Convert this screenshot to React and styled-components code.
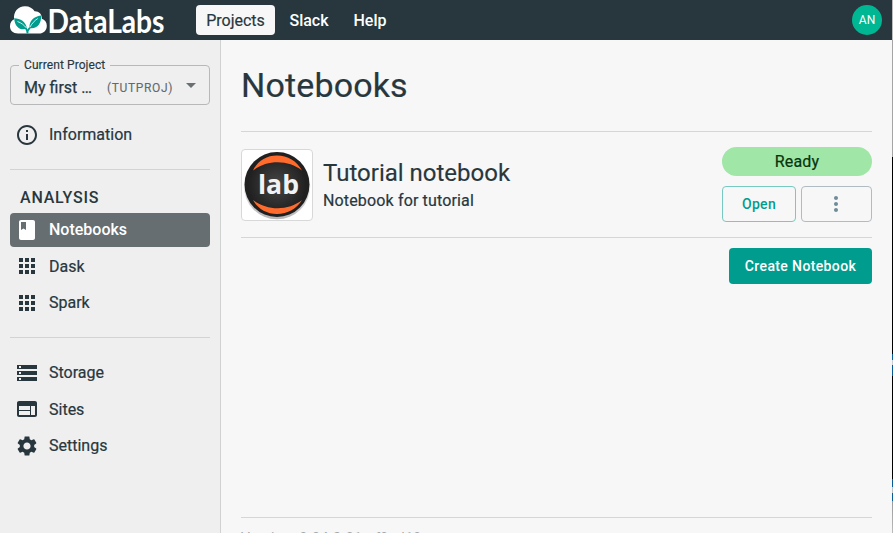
import React from "react";
import styled, { createGlobalStyle } from "styled-components";

const ink = "#28373e";
const teal = "#009d8f";

const GlobalStyle = createGlobalStyle`
  * { box-sizing: border-box; }
  body {
    margin: 0;
    font-family: Roboto, "Liberation Sans", sans-serif;
    color: ${ink};
    overflow: hidden;
    -webkit-font-smoothing: antialiased;
  }
  h1, h2, h3, p { margin: 0; font-weight: 400; }
  button { font-family: inherit; margin: 0; padding: 0; }
`;

const Page = styled.div`
  display: grid;
  grid-template-columns: minmax(0, 1fr) 1px;
  height: 533px;
`;
const Shell = styled.div`
  display: flex;
  flex-direction: column;
  height: 533px;
  overflow: hidden;
`;
const WindowEdge = styled.div`
  background: linear-gradient(#bcbcbc 0 40px, #a5a5a5 40px 157px, #000 157px 354px,
    #075b96 354px 360px, #c8d0d5 360px 365px, #075b96 365px 376px, #000 376px 479px,
    #075b96 479px 487px, #b7c2c8 487px 493px, #075b96 493px 501px, #999 501px, #bbb 533px);
`;
const Header = styled.header`
  display: flex;
  align-items: center;
  flex: 0 0 40px;
  padding: 0 10px;
  background: ${ink};
`;
const Logo = styled.svg`
  display: block;
  width: 156px;
  height: 40px;
  margin-right: 30px;
  overflow: visible;
`;
const Nav = styled.nav`
  display: flex;
  gap: 4px;
  flex: 1;
`;
const NavItem = styled.a`
  height: 30px;
  width: ${(p) => p.$width}px;
  line-height: 31px;
  text-align: center;
  border-radius: 4px;
  font-size: 16px;
  font-weight: ${(p) => (p.$active ? 400 : 500)};
  color: ${(p) => (p.$active ? ink : "#fff")};
  -webkit-text-stroke: ${(p) => (p.$active ? "0.2px" : "0")};
  background: ${(p) => (p.$active ? "#f7f7f7" : "transparent")};
`;
const Avatar = styled.div`
  width: 30px;
  height: 30px;
  border-radius: 50%;
  background: #00b793;
  color: #fff;
  font-size: 12px;
  line-height: 30px;
  text-align: center;
`;
const Body = styled.div`
  display: flex;
  flex: 1;
  min-height: 0;
`;
const Sidebar = styled.aside`
  flex: 0 0 221px;
  padding: 25px 10px 0;
  background: #efefef;
  border-right: 1px solid #d0d1d1;
`;
const ProjectSelect = styled.div`
  position: relative;
  display: flex;
  align-items: center;
  height: 40px;
  padding: 5px 10px 0 13px;
  border: 1px solid #b6b8b9;
  border-radius: 4px;
`;
const SelectLabel = styled.span`
  position: absolute;
  left: 8px;
  top: -8px;
  padding: 0 5px;
  background: #efefef;
  font-size: 12px;
  line-height: 14px;
  letter-spacing: 0.08px;
  -webkit-text-stroke: 0.15px;
`;
const ProjectName = styled.span`
  width: 83px;
  font-size: 16px;
  -webkit-text-stroke: 0.25px;
`;
const ProjectKey = styled.span`
  flex: 1;
  font-size: 12px;
  letter-spacing: 0.64px;
  color: #626a6d;
  -webkit-text-stroke: 0.1px;
`;
const Arrow = styled.svg`
  width: 10px;
  height: 5px;
  margin: -5px 3px 0 0;
`;
const SideItem = styled.a`
  display: flex;
  align-items: center;
  height: 34px;
  margin-top: ${(p) => p.$gap || 0}px;
  padding-left: 5px;
  gap: 10px;
  border-radius: 4px;
  font-size: 16px;
  font-weight: ${(p) => (p.$active ? 500 : 400)};
  -webkit-text-stroke: ${(p) => (p.$active ? "0" : "0.2px")};
  color: ${(p) => (p.$active ? "#fff" : ink)};
  background: ${(p) => (p.$active ? "#666e72" : "transparent")};
`;
const ItemLabel = styled.span`
  padding-bottom: ${(p) => (p.$raised ? 2 : 0)}px;
`;
const Icon = styled.svg`
  width: 24px;
  height: 24px;
  fill: currentColor;
`;
const Divider = styled.div`
  height: 1px;
  margin-top: ${(p) => p.$gap || 0}px;
  background: #d2d3d3;
`;
const Section = styled.h3`
  margin: 18px 0 6px 10px;
  font-size: 16px;
  font-weight: 500;
  line-height: 19px;
  letter-spacing: 0.8px;
`;
const Content = styled.main`
  display: flex;
  flex-direction: column;
  flex: 1;
  padding: 0 20px;
  background: #f7f7f7;
`;
const Title = styled.h1`
  height: 91px;
  padding-top: 24px;
  font-size: 34px;
  line-height: 42px;
  letter-spacing: 0.15px;
  -webkit-text-stroke: 0.2px;
`;
const NotebookRow = styled.section`
  display: flex;
  height: 107px;
  padding-top: 15px;
  border-top: 1px solid #d5d6d6;
  border-bottom: 1px solid #d5d6d6;
`;
const Thumb = styled.div`
  width: 72px;
  height: 72px;
  margin-top: 2px;
  border: 1px solid #d7d8d8;
  border-radius: 4px;
  background: #fff;
`;
const Details = styled.div`
  flex: 1;
  padding: 11px 0 0 10px;
`;
const NotebookName = styled.h2`
  font-size: 24px;
  line-height: 30px;
  -webkit-text-stroke: 0.15px;
`;
const Description = styled.p`
  margin-top: 3px;
  font-size: 16px;
  line-height: 20px;
  letter-spacing: 0.15px;
  -webkit-text-stroke: 0.2px;
`;
const Controls = styled.div`
  display: flex;
  flex-direction: column;
  gap: 10px;
  width: 150px;
`;
const Status = styled.div`
  height: 29px;
  border-radius: 15px;
  background: #9fe6a7;
  color: #07340e;
  font-size: 16px;
  line-height: 29px;
  letter-spacing: 0.15px;
  text-align: center;
  -webkit-text-stroke: 0.2px;
`;
const ButtonRow = styled.div`
  display: flex;
  gap: 5px;
`;
const Button = styled.button`
  display: flex;
  align-items: center;
  justify-content: center;
  width: ${(p) => p.$width}px;
  height: 36px;
  padding-right: ${(p) => (p.$muted ? 1 : 0)}px;
  border: ${(p) => (p.$filled ? "0" : `1px solid ${p.$muted ? "#b0bcc2" : "#78c9c1"}`)};
  border-radius: 4px;
  background: ${(p) => (p.$filled ? teal : "transparent")};
  color: ${(p) => (p.$filled ? "#fff" : p.$muted ? "#708c99" : teal)};
  font-size: 14px;
  font-weight: 500;
  letter-spacing: ${(p) => (p.$filled ? 0.37 : 0.3)}px;
`;
const Actions = styled.div`
  display: flex;
  justify-content: flex-end;
  padding-top: 10px;
`;
const Footer = styled.footer`
  height: 16px;
  flex: none;
  margin-top: auto;
  padding-top: 12px;
  border-top: 1px solid #d5d6d6;
  color: #a3a8aa;
  font-size: 14px;
  line-height: 17px;
  letter-spacing: 0.5px;
  white-space: nowrap;
`;

const paths = {
  info: "M11 7h2v2h-2zm0 4h2v6h-2zm1-9C6.48 2 2 6.48 2 12s4.480 10 10 10 10-4.480 10-10S17.520 2 12 2zm0 18c-4.410 0-8-3.590-8-8s3.590-8 8-8 8 3.590 8 8-3.590 8-8 8z",
  book: "M18 2H6c-1.100 0-2 .9-2 2v16c0 1.100.9 2 2 2h12c1.100 0 2-.9 2-2V4c0-1.100-.9-2-2-2zM6 4h5v8l-2.500-1.500L6 12V4z",
  apps: "M4 8h4V4H4zm6 12h4v-4h-4zm-6 0h4v-4H4zm0-6h4v-4H4zm6 0h4v-4h-4zm6-10v4h4V4zm-6 4h4V4h-4zm6 6h4v-4h-4zm0 6h4v-4h-4z",
  storage: "M2 20h20v-4H2zm2-3h2v2H4zM2 4v4h20V4zm4 3H4V5h2zm-4 7h20v-4H2zm2-3h2v2H4z",
  web: "M20 4H4c-1.100 0-1.990.9-1.990 2L2 18c0 1.100.9 2 2 2h16c1.100 0 2-.9 2-2V6c0-1.100-.9-2-2-2zm-5 14H4v-4h11zm0-5H4V9h11zm5 5h-4V9h4z",
  settings: "M19.140 12.940c.04-.3.06-.61.06-.94 0-.32-.02-.64-.07-.94l2.030-1.580c.18-.14.23-.41.12-.61l-1.920-3.320c-.12-.22-.37-.29-.59-.22l-2.390.96c-.5-.38-1.030-.7-1.620-.94l-.36-2.540c-.04-.24-.24-.41-.48-.41h-3.840c-.24 0-.43.17-.47.41l-.36 2.540c-.59.24-1.130.57-1.620.94l-2.390-.96c-.22-.08-.47 0-.59.22L2.740 8.870c-.12.21-.08.47.12.61l2.030 1.580c-.05.3-.09.63-.09.94s.02.64.07.94l-2.030 1.580c-.18.14-.23.41-.12.61l1.920 3.320c.12.22.37.29.59.22l2.390-.96c.5.38 1.030.7 1.620.94l.36 2.540c.05.24.24.41.48.41h3.840c.24 0 .44-.17.47-.41l.36-2.540c.59-.24 1.130-.56 1.620-.94l2.390.96c.22.08.47 0 .59-.22l1.920-3.320c.12-.22.07-.47-.12-.61zM12 15.600c-1.980 0-3.600-1.620-3.600-3.600s1.620-3.600 3.600-3.600 3.600 1.620 3.600 3.600-1.620 3.600-3.600 3.600z",
  more: "M12 8c1.100 0 2-.9 2-2s-.9-2-2-2-2 .9-2 2 .9 2 2 2zm0 2c-1.100 0-2 .9-2 2s.9 2 2 2 2-.9 2-2-.9-2-2-2zm0 6c-1.100 0-2 .9-2 2s.9 2 2 2 2-.9 2-2-.9-2-2-2z",
};

function Glyph({ name }) {
  return (
    <Icon viewBox="0 0 24 24" aria-hidden="true">
      <path d={paths[name]} />
    </Icon>
  );
}

function NavLink({ icon, label, gap, active, raised }) {
  return (
    <SideItem $gap={gap} $active={active}>
      <Glyph name={icon} />
      <ItemLabel $raised={raised}>{label}</ItemLabel>
    </SideItem>
  );
}

function BrandLogo() {
  return (
    <Logo viewBox="0 0 156 40" role="img" aria-label="DataLabs">
      <path fill="#fff" d="M8 33.500C3 33.500 0 30.500 0 26.300c0-3.500 1.800-6 4.200-7C3 12 8 6.200 15 6.200c4.500 0 7.800 2 9.600 5 4.200-.2 7.600 3 7.200 7.500 3 .8 5 3.500 5 7 0 4.800-3.200 7.800-8 7.800z" />
      <path fill={teal} d="M4.200 18.200c6.300.2 11.600 3 12.800 10.300-5.800 2.600-12.500-1-12.800-10.300zM31 15.500c.7 8.400-4.200 14-11.500 12.600C19 21 23.600 16.600 31 15.500z" />
      <path fill="none" stroke={teal} strokeWidth="1.700" d="M17.500 33.500c0-3 .8-4.500 2.500-6M12 24.500c3.500 2.500 5.500 5.500 5.500 9" />
      <path fill="none" stroke="#fff" strokeWidth=".8" d="M7.500 21.500c4 1.500 6.500 3.500 9 6.500M19.800 27.300c2-3.700 4.500-6.500 8-8.800" />
      <text x="37.500" y="33" fill="#fff" fontFamily="Lato, sans-serif" fontWeight="700" fontSize="33" textLength="117" lengthAdjust="spacingAndGlyphs">DataLabs</text>
    </Logo>
  );
}

function LabLogo() {
  return (
    <svg width="70" height="70" viewBox="0 0 70 70" role="img" aria-label="lab">
      <defs>
        <radialGradient id="disc">
          <stop offset="0" stopColor="#464646" />
          <stop offset="1" stopColor="#202020" />
        </radialGradient>
        <linearGradient id="shade" x2="0" y2="1">
          <stop offset=".5" stopColor="#eee" />
          <stop offset="1" stopColor="#b5b5b5" />
        </linearGradient>
      </defs>
      <circle cx="35" cy="36" r="33.300" fill="url(#shade)" />
      <circle cx="35" cy="34.500" r="32.500" fill="#202020" />
      <circle cx="35" cy="34.500" r="29" fill="url(#disc)" />
      <path fill="#ff6b2c" d="M11 20.500C15.500 11 24.500 5.500 35 5.500s20 5.500 25 15C46.500 9.500 25 9.500 11 20.500zM11 50c14 11 35.500 11 49 0C55 58.500 45.500 64 35 64S15.500 58.500 11 50z" />
      <text x="36.500" y="44" textAnchor="middle" fill="#f2f2f2" fontFamily="Open Sans, sans-serif" fontWeight="700" fontSize="27" textLength="41" lengthAdjust="spacingAndGlyphs">lab</text>
    </svg>
  );
}

export default function App() {
  return (
    <Page>
      <GlobalStyle />
      <Shell>
        <Header>
          <BrandLogo />
          <Nav>
            <NavItem $active $width={79}>Projects</NavItem>
            <NavItem $width={60}>Slack</NavItem>
            <NavItem $width={54}>Help</NavItem>
          </Nav>
          <Avatar>AN</Avatar>
        </Header>
        <Body>
          <Sidebar>
            <ProjectSelect>
              <SelectLabel>Current Project</SelectLabel>
              <ProjectName>My first …</ProjectName>
              <ProjectKey>(TUTPROJ)</ProjectKey>
              <Arrow viewBox="0 0 10 5"><path fill="#697074" d="M0 0h10L5 5z" /></Arrow>
            </ProjectSelect>
            <NavLink icon="info" label="Information" gap={13} raised />
            <Divider $gap={17} />
            <Section>ANALYSIS</Section>
            <NavLink icon="book" label="Notebooks" active raised />
            <NavLink icon="apps" label="Dask" gap={2} />
            <NavLink icon="apps" label="Spark" gap={3} raised />
            <Divider $gap={17} />
            <NavLink icon="storage" label="Storage" gap={18} raised />
            <NavLink icon="web" label="Sites" gap={2} />
            <NavLink icon="settings" label="Settings" gap={3} raised />
          </Sidebar>
          <Content>
            <Title>Notebooks</Title>
            <NotebookRow>
              <Thumb><LabLogo /></Thumb>
              <Details>
                <NotebookName>Tutorial notebook</NotebookName>
                <Description>Notebook for tutorial</Description>
              </Details>
              <Controls>
                <Status>Ready</Status>
                <ButtonRow>
                  <Button $width={74}>Open</Button>
                  <Button $width={71} $muted aria-label="More options"><Glyph name="more" /></Button>
                </ButtonRow>
              </Controls>
            </NotebookRow>
            <Actions><Button $filled $width={143}>Create Notebook</Button></Actions>
            <Footer>Version: 0.34.2-31-gf9cd19</Footer>
          </Content>
        </Body>
      </Shell>
      <WindowEdge />
    </Page>
  );
}
